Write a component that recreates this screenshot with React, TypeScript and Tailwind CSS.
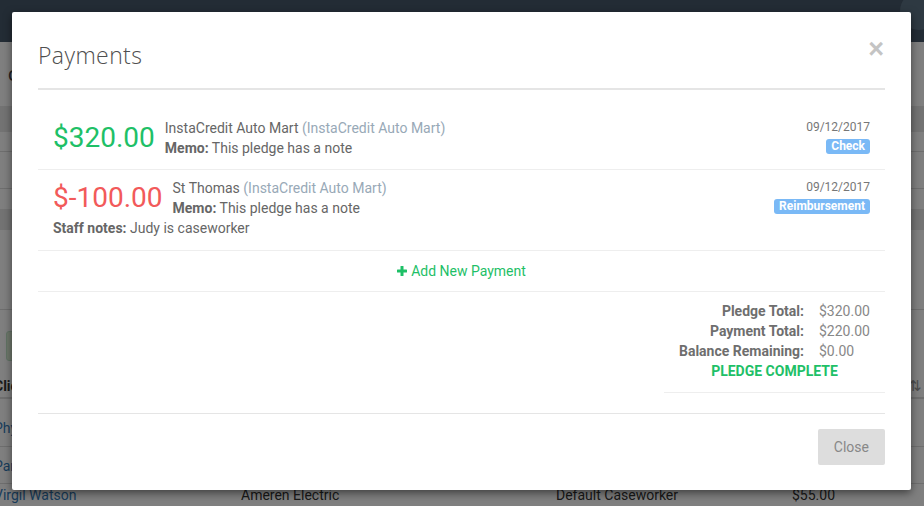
import { Fragment } from 'react';

type Payment = {
  amount: string;
  positive: boolean;
  payee: string;
  vendor: string;
  memo: string;
  staffNotes?: string;
  date: string;
  method: string;
};

const payments: Payment[] = [
  {
    amount: '$320.00',
    positive: true,
    payee: 'InstaCredit Auto Mart',
    vendor: 'InstaCredit Auto Mart',
    memo: 'This pledge has a note',
    date: '09/12/2017',
    method: 'Check',
  },
  {
    amount: '$-100.00',
    positive: false,
    payee: 'St Thomas',
    vendor: 'InstaCredit Auto Mart',
    memo: 'This pledge has a note',
    staffNotes: 'Judy is caseworker',
    date: '09/12/2017',
    method: 'Reimbursement',
  },
];

const totals = [
  { label: 'Pledge Total:', value: '$320.00' },
  { label: 'Payment Total:', value: '$220.00' },
  { label: 'Balance Remaining:', value: '$0.00' },
];

function BackgroundPage() {
  return (
    <div className="min-h-[506px] bg-white font-['Roboto',sans-serif] text-[14px] text-[#333]">
      <div className="relative h-[42px] overflow-hidden bg-[#46596a]">
        <div className="absolute right-[-14px] top-[-8px] h-[38px] w-[38px] rounded-full bg-[#5d7285]" />
      </div>
      <div className="flex h-[64px] items-center px-[8px] text-[20px] text-[#444]">case details</div>
      <div className="h-[26px] bg-[#e6e6e6]" />
      <div className="h-[20px] border-b border-[#ddd]" />
      <div className="h-[37px] border-b border-[#ddd]" />
      <div className="h-[20px]" />
      <div className="h-[21px] bg-[#e6e6e6]" />
      <div className="h-[80px] border-b border-[#ddd]" />
      <div className="h-[21px]" />
      <div className="ml-[6px] h-[30px] w-[120px] rounded-[3px] border border-[#c3e6cb] bg-[#dff0d8]" />
      <div className="-ml-[6px] grid h-[38px] grid-cols-[247px_315px_236px_1fr] items-center border-b-2 border-[#ddd] pt-[14px] font-bold text-[#333]">
        <span>Client</span>
        <span>Vendor</span>
        <span>Caseworker</span>
        <span className="flex justify-between pr-[2px]">
          Amount <span className="text-[15px] font-normal text-[#999]">⇅</span>
        </span>
      </div>
      <div className="-ml-[6px] flex h-[48px] items-center border-b border-[#ddd] pt-[12px] text-[#337ab7]">Physician Group</div>
      <div className="-ml-[6px] flex h-[37px] items-center border-b border-[#ddd] pt-[2px] text-[#337ab7]">Parker Hall</div>
      <div className="-ml-[6px] grid h-[22px] grid-cols-[247px_315px_236px_1fr] items-end">
        <span className="text-[#337ab7]">Virgil Watson</span>
        <span>Ameren Electric</span>
        <span>Default Caseworker</span>
        <span>$55.00</span>
      </div>
    </div>
  );
}

function PlusIcon() {
  return (
    <svg width="10" height="10" viewBox="0 0 10 10" className="mr-[4px] inline-block" aria-hidden>
      <rect x="3.5" y="0" width="3" height="10" rx="0.5" fill="currentColor" />
      <rect x="0" y="3.5" width="10" height="3" rx="0.5" fill="currentColor" />
    </svg>
  );
}

export default function App() {
  return (
    <div className="relative h-[506px] w-[924px] overflow-hidden">
      <BackgroundPage />
      <div className="absolute inset-0 bg-black/50" />

      <div className="absolute left-[12px] top-[12px] w-[899px] rounded-[2px] bg-white px-[26px] font-['Roboto',sans-serif] shadow-[0_3px_9px_rgba(0,0,0,0.5)]">
        <div className="flex items-start justify-between border-b-2 border-[#e5e5e5] pb-[17px] pt-[28px]">
          <h2 className="font-['Open_Sans',sans-serif] text-[23px] font-light leading-[31px] tracking-[0.4px] text-[#4f4f4f]">
            Payments
          </h2>
          <button className="mr-[1px] mt-[-4px] font-['Liberation_Sans',sans-serif] text-[27px] font-bold leading-none text-[#c4c4c4]">
            ×
          </button>
        </div>

        <div className="pt-[20px]">
          {payments.map((p) => (
            <div key={p.payee} className="flex items-start justify-between border-b border-[#eee] pb-[11px] pl-[15px] pr-[15px] pt-[8px]">
              <div>
                <div className="flex items-center">
                  <span className={`text-[28px] leading-[40px] ${p.positive ? 'text-[#1ec067]' : 'text-[#f25a5a]'}`}>
                    {p.amount}
                  </span>
                  <div className="ml-[10px] text-[14px] leading-[20px] text-[#666]">
                    <div>
                      {p.payee} <span className="text-[#98a9b7]">({p.vendor})</span>
                    </div>
                    <div>
                      <span className="font-bold">Memo:</span> {p.memo}
                    </div>
                  </div>
                </div>
                {p.staffNotes && (
                  <div className="text-[14px] leading-[21px] text-[#666]">
                    <span className="font-bold">Staff notes:</span> {p.staffNotes}
                  </div>
                )}
              </div>
              <div className="flex flex-col items-end">
                <span className="text-[12px] leading-[18px] text-[#777]">{p.date}</span>
                <span className="mt-[3px] rounded-[3px] bg-[#7ab9f6] px-[5px] text-[12px] font-bold leading-[15px] text-white">
                  {p.method}
                </span>
              </div>
            </div>
          ))}

          <div className="flex items-center justify-center border-b border-[#eee] py-[10px] text-[14px] leading-[20px] text-[#1ec067]">
            <PlusIcon />
            Add New Payment
          </div>

          <div className="ml-auto w-[221px] border-b border-[#eee] pb-[11px] pt-[9px]">
            <div className="grid grid-cols-[140px_1fr] gap-x-[15px] text-[14px] leading-[20px]">
              {totals.map((t) => (
                <Fragment key={t.label}>
                  <span className="text-right font-bold text-[#6e6e6e]">{t.label}</span>
                  <span className="text-[#888]">{t.value}</span>
                </Fragment>
              ))}
              <span className="col-span-2 text-center font-bold uppercase text-[#1ec067]">Pledge Complete</span>
            </div>
          </div>
        </div>

        <div className="mt-[20px] flex justify-end border-t border-[#e5e5e5] pb-[25px] pt-[15px]">
          <button className="h-[36px] rounded-[2px] bg-[#dddddd] px-[16px] text-[14px] text-[#888]">Close</button>
        </div>
      </div>
    </div>
  );
}
